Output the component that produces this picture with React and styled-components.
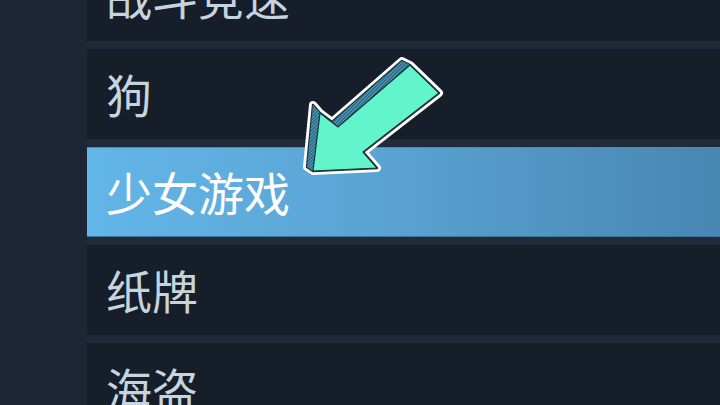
import React from "react";
import styled, { createGlobalStyle } from "styled-components";

const Global = createGlobalStyle`
  html, body { margin: 0; padding: 0; background: #1c2736; overflow: hidden; }
  #root { width: 720px; height: 405px; }
`;

const Page = styled.div`
  position: relative;
  width: 720px;
  height: 405px;
  overflow: hidden;
  display: flex;
  background: #1c2736;
  font-family: "Noto Sans CJK SC", "Noto Sans", sans-serif;
`;

const Sidebar = styled.div`
  width: 87px;
  flex: none;
  background: #1c2635;
`;

const List = styled.div`
  flex: 1;
  display: flex;
  flex-direction: column;
  gap: 8px;
  margin-top: -49px;
  background: #1f2b3a;
`;

const Row = styled.div`
  height: 90px;
  flex: none;
  display: flex;
  align-items: center;
  padding-left: 19px;
  box-sizing: border-box;
  font-size: 46px;
  line-height: 1;
  color: ${(p) => (p.$active ? "#ffffff" : "#c6d4df")};
  background: ${(p) =>
    p.$active
      ? "linear-gradient(to right, #63b6e8 0%, #5aa4d3 45%, #4886b2 100%)"
      : "#161e2a"};
  box-shadow: ${(p) =>
    p.$active ? "inset 0 1px 0 #4c8cb6, inset 0 -1px 0 #3f7699" : "none"};
`;

const Label = styled.span`
  display: block;
  transform: translateY(-1px);
`;

const ArrowSvg = styled.svg`
  position: absolute;
  left: 295px;
  top: 50px;
  width: 160px;
  height: 130px;
  pointer-events: none;
`;

const front = "410,65 439,93 363,152 377,168 313,171 320,113 338,127";
const sideA = "402,61 410,65 338,127 332,122";
const sideB = "313,105 320,113 313,171 307,167";
const outline = "402,61 410,65 439,93 363,152 377,168 313,171 307,167 313,105 320,113 332,122";

function Arrow() {
  return (
    <ArrowSvg viewBox="295 50 160 130">
      <defs>
        <pattern id="stripes" patternUnits="userSpaceOnUse" width="2.4" height="2.4" patternTransform="rotate(45)">
          <rect width="2.4" height="2.4" fill="#4c9cbd" />
          <rect width="1" height="2.4" fill="#27566f" />
        </pattern>
      </defs>
      <polygon points={outline} fill="#ffffff" stroke="#ffffff" strokeWidth="8" strokeLinejoin="round" />
      <polygon points={outline} fill="#1d3238" stroke="#1d3238" strokeWidth="2.4" strokeLinejoin="round" />
      <polygon points={sideA} fill="url(#stripes)" />
      <polygon points={sideB} fill="url(#stripes)" />
      <polygon points={front} fill="#62f5cb" stroke="#1d3238" strokeWidth="1.2" strokeLinejoin="round" />
    </ArrowSvg>
  );
}

const items = [
  { label: "战斗竞速" },
  { label: "狗" },
  { label: "少女游戏", active: true },
  { label: "纸牌" },
  { label: "海盗" },
];

export default function App() {
  return (
    <>
      <Global />
      <Page>
        <Sidebar />
        <List>
          {items.map((it) => (
            <Row key={it.label} $active={it.active}>
              <Label>{it.label}</Label>
            </Row>
          ))}
        </List>
        <Arrow />
      </Page>
    </>
  );
}
